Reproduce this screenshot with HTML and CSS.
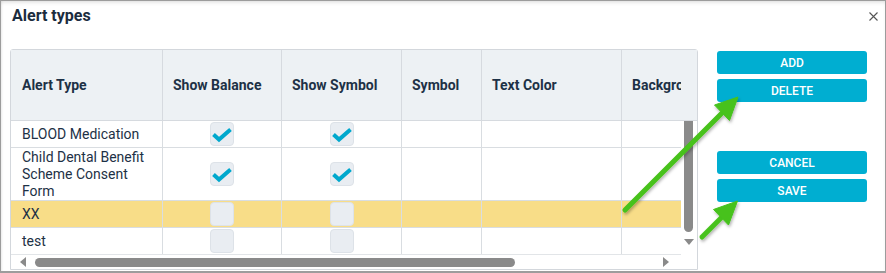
FILE: index.html
```html
<!DOCTYPE html>
<html>
<head>
<meta charset="utf-8">
<link rel="stylesheet" href="styles.css">
</head>
<body>
<div class="dialog">
  <div class="title-bar">
    <div class="title">Alert types</div>
    <div class="close"><svg width="9" height="9" viewBox="0 0 9 9"><path d="M0.5 0.5 L8.5 8.5 M8.5 0.5 L0.5 8.5" stroke="#555" stroke-width="1.1" fill="none"/></svg></div>
  </div>
  <div class="content">
    <div class="grid">
      <div class="head">
        <div class="head-clip">
          <div class="row-cols">
            <div class="hcell">Alert Type</div>
            <div class="hcell">Show Balance</div>
            <div class="hcell">Show Symbol</div>
            <div class="hcell">Symbol</div>
            <div class="hcell">Text Color</div>
            <div class="hcell">Background</div>
          </div>
        </div>
      </div>
      <div class="mid">
        <div class="body">
          <div class="row-cols row r27">
            <div class="cell">BLOOD Medication</div>
            <div class="cell c"><span class="chk"><svg width="24" height="24" viewBox="0 0 24 24"><path d="M3.5 12.5 L9 17.5 L20.5 7.5" stroke="#00a8cd" stroke-width="4" fill="none"/></svg></span></div>
            <div class="cell c"><span class="chk"><svg width="24" height="24" viewBox="0 0 24 24"><path d="M3.5 12.5 L9 17.5 L20.5 7.5" stroke="#00a8cd" stroke-width="4" fill="none"/></svg></span></div>
            <div class="cell"></div>
            <div class="cell"></div>
            <div class="cell"></div>
          </div>
          <div class="row-cols row r53">
            <div class="cell">Child Dental Benefit Scheme Consent Form</div>
            <div class="cell c"><span class="chk"><svg width="24" height="24" viewBox="0 0 24 24"><path d="M3.5 12.5 L9 17.5 L20.5 7.5" stroke="#00a8cd" stroke-width="4" fill="none"/></svg></span></div>
            <div class="cell c"><span class="chk"><svg width="24" height="24" viewBox="0 0 24 24"><path d="M3.5 12.5 L9 17.5 L20.5 7.5" stroke="#00a8cd" stroke-width="4" fill="none"/></svg></span></div>
            <div class="cell"></div>
            <div class="cell"></div>
            <div class="cell"></div>
          </div>
          <div class="row-cols row r27 selected">
            <div class="cell">XX</div>
            <div class="cell c"><span class="chk"></span></div>
            <div class="cell c"><span class="chk"></span></div>
            <div class="cell"></div>
            <div class="cell"></div>
            <div class="cell"></div>
          </div>
          <div class="row-cols row r27">
            <div class="cell">test</div>
            <div class="cell c"><span class="chk"></span></div>
            <div class="cell c"><span class="chk"></span></div>
            <div class="cell"></div>
            <div class="cell"></div>
            <div class="cell"></div>
          </div>
        </div>
        <div class="vscroll">
          <div class="vthumb"></div>
          <div class="arrow-down"></div>
        </div>
      </div>
      <div class="hbar">
        <div class="hscroll">
          <div class="arrow-left"></div>
          <div class="hthumb"></div>
          <div class="arrow-right"></div>
        </div>
        <div class="corner"></div>
      </div>
    </div>
    <div class="actions">
      <button class="btn">ADD</button>
      <button class="btn">DELETE</button>
      <button class="btn gap-top">CANCEL</button>
      <button class="btn">SAVE</button>
    </div>
  </div>
  <svg class="annot" width="886" height="273" viewBox="0 0 886 273">
    <defs>
      <filter id="sh" x="-20%" y="-20%" width="140%" height="140%">
        <feDropShadow dx="1" dy="2" stdDeviation="1.5" flood-color="#000" flood-opacity="0.3"/>
      </filter>
    </defs>
    <g filter="url(#sh)" fill="#46c21c" stroke="#46c21c">
      <line x1="625" y1="210" x2="724" y2="111" stroke-width="5" stroke-linecap="round"/>
      <polygon points="738,97 714.5,105 729.5,120.5" stroke-width="1" stroke-linejoin="round"/>
      <line x1="702" y1="237" x2="723" y2="216" stroke-width="5" stroke-linecap="round"/>
      <polygon points="737.5,201 713.5,209.5 728.5,225" stroke-width="1" stroke-linejoin="round"/>
    </g>
  </svg>
</div>
</body>
</html>
```

FILE: styles.css
```css
html, body {
  margin: 0;
  padding: 0;
  background: #ffffff;
}

.dialog {
  position: relative;
  width: 886px;
  height: 273px;
  box-sizing: border-box;
  border: 1px solid #9c9c9c;
  border-bottom-width: 2px;
  box-shadow: inset 0 3px 4px -2px rgba(0, 0, 0, 0.15), inset 2px 0 3px -2px rgba(0, 0, 0, 0.12);
  padding: 5px 0 0 9px;
  font-family: Roboto, "Liberation Sans", sans-serif;
  color: #1d3146;
  overflow: hidden;
}

.title-bar {
  display: flex;
  justify-content: space-between;
  align-items: flex-start;
  height: 20px;
}

.title {
  font-size: 16px;
  font-weight: 700;
  line-height: 20px;
  padding-left: 2px;
  color: #1b2c3e;
}

.close {
  margin-top: 6px;
  margin-right: 7px;
  width: 9px;
  height: 9px;
  display: flex;
}

.content {
  display: flex;
  gap: 19px;
  margin-top: 23px;
}

.grid {
  width: 688px;
  height: 221px;
  box-sizing: border-box;
  border: 1px solid #d3d7dc;
  border-radius: 3px 3px 0 0;
  display: flex;
  flex-direction: column;
  background: #fff;
}

.head {
  height: 71px;
  flex: none;
  box-sizing: border-box;
  background: #edf1f4;
  border-bottom: 1px solid #d6dadf;
}

.head-clip {
  width: 670px;
  height: 70px;
  overflow: hidden;
}

.row-cols {
  display: grid;
  grid-template-columns: 152px 119px 120px 80px 140px 150px;
  width: 761px;
}

.hcell {
  height: 70px;
  box-sizing: border-box;
  border-right: 1px solid #d6dadf;
  padding: 0 10px;
  display: flex;
  align-items: center;
  font-size: 14px;
  font-weight: 700;
  color: #1d3146;
  white-space: nowrap;
  overflow: hidden;
}

.hcell:first-child {
  padding-left: 11px;
}

.mid {
  display: flex;
  height: 133px;
  flex: none;
}

.body {
  width: 670px;
  height: 133px;
  overflow: hidden;
}

.row {
  box-sizing: border-box;
  border-bottom: 1px solid #d9dde1;
}

.r27 { height: 27px; }
.r53 { height: 53px; }

.selected {
  background: #f8dd88;
}

.cell {
  box-sizing: border-box;
  border-right: 1px solid #d9dde1;
  padding: 0 10px;
  display: flex;
  align-items: center;
  font-size: 14px;
  line-height: 17px;
  color: #1d3146;
}

.cell:first-child {
  padding-left: 11px;
  padding-right: 6px;
}

.cell.c {
  justify-content: center;
  padding: 0;
}

.chk {
  width: 24px;
  height: 24px;
  box-sizing: border-box;
  border: 1px solid #dde2e8;
  border-radius: 4px;
  background: #e9edf2;
  display: flex;
  align-items: center;
  justify-content: center;
}

.chk svg {
  margin: -1px;
  display: block;
}

.vscroll {
  width: 16px;
  height: 133px;
  position: relative;
  display: flex;
  flex-direction: column;
  align-items: center;
  background: #fff;
}

.vthumb {
  width: 9px;
  height: 111px;
  background: #8a8a8a;
  border-radius: 0 0 5px 5px;
  margin-left: -1px;
}

.arrow-down {
  margin-top: 7px;
  margin-left: -1px;
  width: 0;
  height: 0;
  border-left: 5px solid transparent;
  border-right: 5px solid transparent;
  border-top: 6px solid #8a8a8a;
}

.hbar {
  display: flex;
  height: 15px;
  flex: none;
}

.hscroll {
  width: 670px;
  height: 15px;
  box-sizing: border-box;
  border-top: 1px solid #e2e5e8;
  display: flex;
  align-items: center;
  padding-left: 9px;
}

.arrow-left {
  width: 0;
  height: 0;
  border-top: 5px solid transparent;
  border-bottom: 5px solid transparent;
  border-right: 6px solid #8a8a8a;
}

.hthumb {
  margin-left: 9px;
  width: 480px;
  height: 9px;
  background: #8a8a8a;
  border-radius: 5px;
}

.arrow-right {
  margin-left: 148px;
  width: 0;
  height: 0;
  border-top: 5px solid transparent;
  border-bottom: 5px solid transparent;
  border-left: 6px solid #8a8a8a;
}

.corner {
  flex: 1;
}

.actions {
  display: flex;
  flex-direction: column;
  gap: 5px;
  width: 150px;
  margin-top: 2px;
}

.btn {
  height: 23px;
  border: none;
  border-radius: 3px;
  background: #00aed1;
  color: #ffffff;
  font-family: Roboto, "Liberation Sans", sans-serif;
  font-size: 12px;
  font-weight: 500;
  padding: 0;
  cursor: pointer;
}

.gap-top {
  margin-top: 44px;
}

.annot {
  position: absolute;
  left: -1px;
  top: -1px;
  pointer-events: none;
}
```
